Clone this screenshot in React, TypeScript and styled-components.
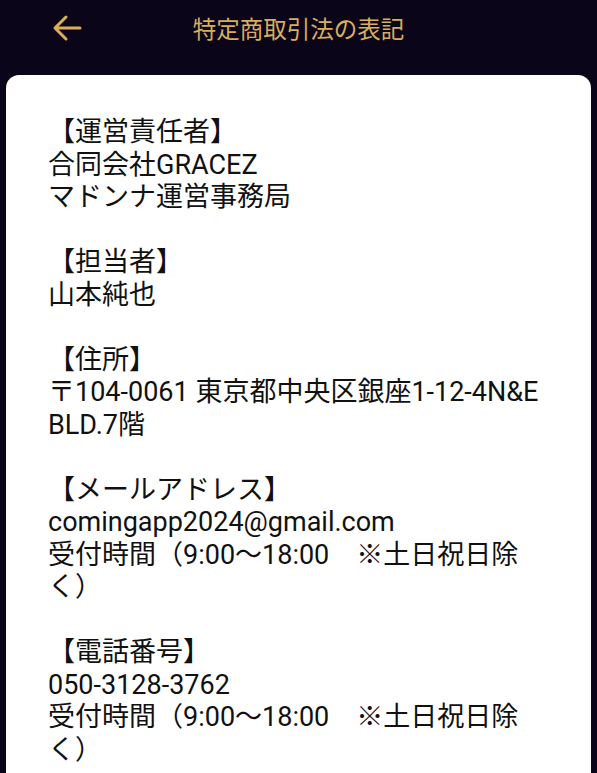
import React from "react";
import styled, { createGlobalStyle } from "styled-components";

const GlobalStyle = createGlobalStyle`
  html, body {
    margin: 0;
    padding: 0;
    background: #0b0519;
  }
  body {
    font-family: Roboto, "Noto Sans CJK JP", sans-serif;
  }
`;

type Section = {
  title: string;
  lines: string[];
};

const sections: Section[] = [
  { title: "【運営責任者】", lines: ["合同会社GRACEZ", "マドンナ運営事務局"] },
  { title: "【担当者】", lines: ["山本純也"] },
  { title: "【住所】", lines: ["〒104-0061 東京都中央区銀座1-12-4N&E BLD.7階"] },
  {
    title: "【メールアドレス】",
    lines: ["comingapp2024@gmail.com", "受付時間（9:00〜18:00　※土日祝日除く）"],
  },
  {
    title: "【電話番号】",
    lines: ["050-3128-3762", "受付時間（9:00〜18:00　※土日祝日除く）"],
  },
];

function App() {
  return (
    <Page>
      <GlobalStyle />
      <Header>
        <BackButton aria-label="戻る">
          <svg width="30" height="28" viewBox="0 0 30 28" fill="none">
            <path
              d="M28 14H3M14 3L3 14l11 11"
              stroke="#d9ad5b"
              strokeWidth="3"
              strokeLinecap="round"
              strokeLinejoin="round"
            />
          </svg>
        </BackButton>
        <Title>特定商取引法の表記</Title>
      </Header>
      <Card>
        {sections.map((s) => (
          <Block key={s.title}>
            <Heading>{s.title}</Heading>
            {s.lines.map((l, i) => (
              <Line key={i}>{l}</Line>
            ))}
          </Block>
        ))}
      </Card>
    </Page>
  );
}

const Page = styled.div`
  min-height: 100vh;
  background: #0b0519;
  display: flex;
  flex-direction: column;
`;

const Header = styled.header`
  height: 56px;
  display: flex;
  align-items: center;
  justify-content: center;
  position: relative;
`;

const BackButton = styled.button`
  position: absolute;
  left: 52px;
  top: 14px;
  padding: 0;
  border: none;
  background: none;
  display: flex;
`;

const Title = styled.h1`
  margin: 0;
  font-family: "Noto Sans CJK JP", sans-serif;
  font-weight: 400;
  font-size: 23.5px;
  color: #d9ad5b;
  letter-spacing: 0;
`;

const Card = styled.main`
  margin: 19px 6px 0 6px;
  background: #ffffff;
  border-radius: 13px 13px 0 0;
  padding: 41px 42px 40px 42px;
  display: flex;
  flex-direction: column;
  gap: 32.5px;
  flex: 1;
`;

const Block = styled.section`
  display: flex;
  flex-direction: column;
`;

const Heading = styled.div`
  font-size: 27px;
  line-height: 32.5px;
  color: #111;
`;

const Line = styled.div`
  font-size: 27px;
  line-height: 32.5px;
  color: #111;
`;

export default App;
